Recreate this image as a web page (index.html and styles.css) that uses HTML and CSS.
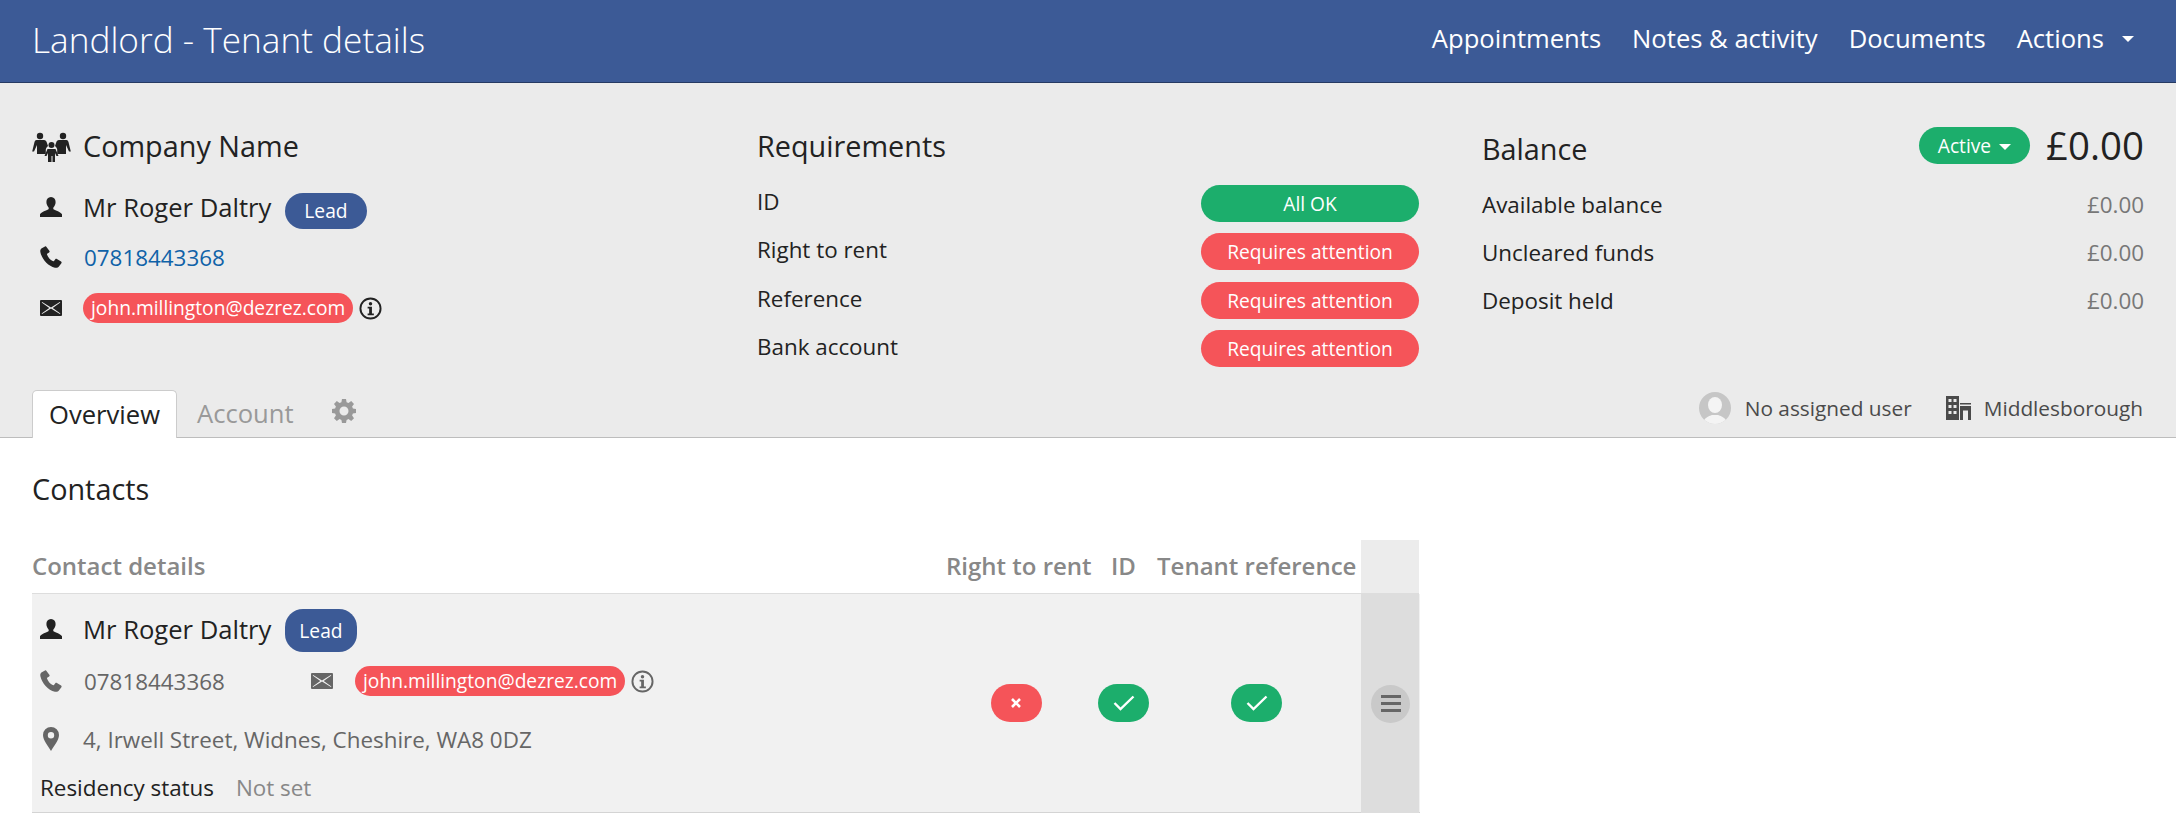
FILE: index.html
```html
<!DOCTYPE html>
<html lang="en">
<head>
<meta charset="utf-8">
<title>Landlord - Tenant details</title>
<link rel="stylesheet" href="styles.css">
</head>
<body>
<svg class="defs" width="0" height="0" aria-hidden="true">
  <symbol id="i-person" viewBox="0 0 22 20"><path d="M11 0c3 0 4.600 2.200 4.600 5 0 2.300-1 4.200-2 5.300-.5.600-.5 1.700.2 2.200 1.300.9 7.200 2.500 8.200 4.800V20H0v-2.700c1-2.300 6.900-3.900 8.200-4.800.7-.5.700-1.600.2-2.200-1-1.100-2-3-2-5.300C6.400 2.200 8 0 11 0z"/></symbol>
  <symbol id="i-phone" viewBox="0 0 22 22"><path d="M5 .5 1.800 2.200C.5 3 0 4.500.4 6.200c1.400 6.900 7.700 14 14.500 15.500 1.800.4 3.300-.3 4.200-1.500l2.300-3c.4-.6.300-1.300-.3-1.700l-4.200-2.600c-.6-.3-1.200-.2-1.600.3l-1.300 1.700c-.3.400-.8.400-1.300.2-2.400-1.200-4.800-4-5.600-6.400-.2-.5 0-1 .4-1.200l1.600-1c.5-.3.700-1 .4-1.500L6.500 1C6.200.4 5.600.2 5 .5z"/></symbol>
  <symbol id="i-mail" viewBox="0 0 22 16"><path fill-rule="evenodd" d="M1 0h20a1 1 0 0 1 1 1v14a1 1 0 0 1-1 1H1a1 1 0 0 1-1-1V1a1 1 0 0 1 1-1zm1.200 1.900-.5.700L9.300 8l-7.700 5.400.5.700L11 8.600l8.900 5.500.5-.7L12.700 8l7.600-5.400-.5-.7L11 7.500z"/></symbol>
  <symbol id="i-info" viewBox="0 0 24 24"><circle cx="12" cy="12" r="10.500" fill="none" stroke="currentColor" stroke-width="2"/><circle cx="12" cy="7" r="1.800"/><path d="M9 10.300h4.500v7H15.500V19h-6.500v-1.700h1.600v-5.300H9z"/></symbol>
  <symbol id="i-pin" viewBox="0 0 16 24"><path fill-rule="evenodd" d="M8 0a8 8 0 0 1 8 8c0 5-5 11-8 16C5 19 0 13 0 8a8 8 0 0 1 8-8zm0 5a3.200 3.200 0 1 0 0 6.400A3.200 3.200 0 0 0 8 5z"/></symbol>
</svg>

<header class="topbar">
  <h1 class="topbar-title">Landlord - Tenant details</h1>
  <nav class="topbar-nav">
    <a>Appointments</a>
    <a>Notes &amp; activity</a>
    <a>Documents</a>
    <a class="actions">Actions <span class="caret"></span></a>
  </nav>
</header>

<section class="summary">
  <div class="summary-grid">
    <div class="col-contact">
      <div class="line line-company">
        <svg class="ico-family" viewBox="0 0 39 30"><g fill="#222"><circle cx="8" cy="4" r="3.200"/><circle cx="31" cy="4" r="3.200"/><path d="M4.500 8h7.500c1.500 0 2.400 1 2.800 2.500L16 14c-1 .8-2 2-2.200 3.500V22H5v-9L2 19.500H.2L2.500 10C2.900 8.700 3.500 8 4.500 8z"/><path d="M34.500 8H27c-1.500 0-2.400 1-2.800 2.500L23 14c1 .8 2 2 2.200 3.500V22H34v-9l3 6.500h1.800L36.500 10C36.100 8.700 35.500 8 34.500 8z"/><circle cx="19.500" cy="13" r="3"/><path d="M15.500 17h8l3 7h-2l-1.500-3v9h-2.500v-6h-1v6H16v-9l-1.500 3h-2z"/></g></svg>
        <span class="company">Company Name</span>
      </div>
      <div class="line line-name">
        <svg class="ico"><use href="#i-person"/></svg>
        <span class="name">Mr Roger Daltry</span>
        <span class="lead lead-low">Lead</span>
      </div>
      <div class="line line-phone">
        <svg class="ico"><use href="#i-phone"/></svg>
        <a class="tel">07818443368</a>
      </div>
      <div class="line line-mail">
        <svg class="ico"><use href="#i-mail"/></svg>
        <span class="mail-pill">john.millington@dezrez.com</span>
        <svg class="ico-info"><use href="#i-info"/></svg>
      </div>
    </div>

    <div class="col-req">
      <h2 class="req-title">Requirements</h2>
      <div class="req-row"><span class="req-label">ID</span><span class="status ok">All OK</span></div>
      <div class="req-row"><span class="req-label">Right to rent</span><span class="status bad">Requires attention</span></div>
      <div class="req-row"><span class="req-label">Reference</span><span class="status bad">Requires attention</span></div>
      <div class="req-row"><span class="req-label">Bank account</span><span class="status bad">Requires attention</span></div>
    </div>

    <div class="col-bal">
      <div class="bal-head">
        <h2 class="bal-title">Balance</h2>
        <span class="active-pill">Active <span class="caret caret-sm"></span></span>
        <span class="bal-amount">£0.00</span>
      </div>
      <div class="bal-row"><span>Available balance</span><span class="muted">£0.00</span></div>
      <div class="bal-row"><span>Uncleared funds</span><span class="muted">£0.00</span></div>
      <div class="bal-row"><span>Deposit held</span><span class="muted">£0.00</span></div>
    </div>
  </div>

  <div class="tabbar">
    <div class="tabs">
      <span class="tab tab-on">Overview</span>
      <span class="tab">Account</span>
      <svg class="gear" viewBox="0 0 24 24"><path fill="#999" fill-rule="evenodd" d="M10 0h4l.6 3.200 1.900.8L19.200 2.100 22 4.900 20.100 7.600l.8 1.900 3.100.5v4l-3.100.6-.8 1.900 1.900 2.700-2.800 2.800-2.700-1.900-1.900.8L14 24h-4l-.6-3.100-1.900-.8-2.700 1.900L2 19.200l1.900-2.700-.8-1.900L0 14v-4l3.100-.5.800-1.900L2 4.900 4.800 2.100l2.700 1.900 1.900-.8zM12 7.500a4.500 4.500 0 1 0 0 9 4.500 4.500 0 0 0 0-9z"/></svg>
    </div>
    <div class="assign">
      <svg class="avatar" viewBox="0 0 32 32"><defs><clipPath id="av"><circle cx="16" cy="16" r="16"/></clipPath></defs><circle cx="16" cy="16" r="16" fill="#c6c6c6"/><g clip-path="url(#av)" fill="#f4f4f4"><ellipse cx="16" cy="13" rx="7" ry="8"/><path d="M4 32c0-6 6-8 9-9h6c3 1 9 3 9 9z"/></g></svg>
      <span>No assigned user</span>
      <svg class="building" viewBox="0 0 25 24"><path fill="#4a4a4a" fill-rule="evenodd" d="M0 0h13v24H0zM2.500 3v3h3V3zm5 0v3h3V3zM2.500 9v3h3V9zm5 0v3h3V9zM2.500 15v3h3v-3zm5 0v3h3v-3zM14 7h11v1.500H14zM14 10h11v14h-3v-9.500h-5V24h-3z"/></svg>
      <span>Middlesborough</span>
    </div>
  </div>
</section>

<main class="content">
  <h2 class="contacts-title">Contacts</h2>
  <div class="ctable">
    <div class="chead">
      <div class="cell-main">Contact details</div>
      <div class="cell-r">Right to rent</div>
      <div class="cell-i">ID</div>
      <div class="cell-t">Tenant reference</div>
      <div class="cell-act"></div>
    </div>
    <div class="crow">
      <div class="cell-main">
        <div class="c-line c-name">
          <svg class="ico"><use href="#i-person"/></svg>
          <span class="name">Mr Roger Daltry</span>
          <span class="lead lead-tall">Lead</span>
        </div>
        <div class="c-line c-contact">
          <svg class="ico grey"><use href="#i-phone"/></svg>
          <span class="c-tel">07818443368</span>
          <svg class="ico grey"><use href="#i-mail"/></svg>
          <span class="mail-pill">john.millington@dezrez.com</span>
          <svg class="ico-info grey"><use href="#i-info"/></svg>
        </div>
        <div class="c-line c-addr">
          <svg class="ico-pin"><use href="#i-pin"/></svg>
          <span>4, Irwell Street, Widnes, Cheshire, WA8 0DZ</span>
        </div>
        <div class="c-line c-res">
          <span>Residency status</span>
          <span class="not-set">Not set</span>
        </div>
      </div>
      <div class="cell-r"><span class="flag bad"><svg viewBox="0 0 12 12"><path d="M2 2l8 8M10 2l-8 8" stroke="#fff" stroke-width="2.600" fill="none"/></svg></span></div>
      <div class="cell-i"><span class="flag ok"><svg class="tick" viewBox="0 0 22 16"><path d="M1.500 8l6 6L20.500 1.500" stroke="#fff" stroke-width="2.400" fill="none"/></svg></span></div>
      <div class="cell-t"><span class="flag ok"><svg class="tick" viewBox="0 0 22 16"><path d="M1.500 8l6 6L20.500 1.500" stroke="#fff" stroke-width="2.400" fill="none"/></svg></span></div>
      <div class="cell-act"><span class="burger"><i></i><i></i><i></i></span></div>
    </div>
  </div>
</main>
</body>
</html>
```
FILE: styles.css
```css
* { box-sizing: border-box; }
html, body { margin: 0; padding: 0; }
body {
  height: 816px;
  overflow: hidden;
  background: #fff;
  color: #222;
  font-family: "Open Sans", "Liberation Sans", sans-serif;
  font-size: 22.4px;
}
.defs { position: absolute; }
h1, h2 { margin: 0; font-weight: 400; }

.topbar {
  height: 83px;
  background: #3c5a96;
  border-bottom: 1px solid #263a63;
  color: #fff;
  display: flex;
  align-items: center;
  justify-content: space-between;
  padding: 0 42px 5px 32px;
}
.topbar-title { font-size: 35.2px; font-weight: 300; }
.topbar-nav { display: flex; gap: 31px; font-size: 25.6px; }
.actions { display: flex; align-items: center; gap: 18px; }
.caret {
  display: inline-block;
  width: 0; height: 0;
  border-left: 6px solid transparent;
  border-right: 6px solid transparent;
  border-top: 6px solid #fff;
}
.caret-sm { vertical-align: middle; margin-left: 3px; }

.summary {
  height: 355px;
  background: #ebebeb;
  border-bottom: 1px solid #bdbdbd;
  display: flex;
  flex-direction: column;
  justify-content: space-between;
}
.summary-grid {
  display: grid;
  grid-template-columns: repeat(3, 662px);
  column-gap: 63px;
  padding: 0 32px;
}
.line { display: flex; align-items: center; }
.line-company { margin-top: 41px; height: 42px; font-size: 28.8px; }
.ico-family { width: 39px; height: 30px; margin: 3px 12px 0 0; }
.ico { width: 22px; height: 22px; fill: #222; margin: 0 21px 0 8px; flex: none; }
.line-name { margin-top: 21px; height: 40px; }
.name { font-size: 25.6px; }
.lead {
  background: #3c5a96;
  color: #fff;
  font-size: 19.2px;
  border-radius: 18px;
  padding: 0 19px;
  height: 36px;
  line-height: 36px;
  margin-left: 14px;
}
.lead-low { margin-top: 7px; }
.line-phone { margin-top: 10px; height: 40px; }
.tel { color: #0f62a8; font-size: 22.4px; margin-left: 1px; }
.line-mail { margin-top: 11px; height: 40px; }
.mail-pill {
  background: #f55459;
  color: #fff;
  font-size: 19.2px;
  height: 30px;
  line-height: 30px;
  border-radius: 15px;
  padding: 0 8px;
  white-space: nowrap;
  flex: none;
}
.ico-info { width: 23px; height: 23px; margin-left: 6px; color: #222; fill: currentColor; flex: none; }

.req-title { font-size: 28.8px; height: 40px; margin-top: 43px; line-height: 40px; }
.req-row {
  display: flex; justify-content: space-between; align-items: center;
  height: 37px;
  margin-bottom: 11.3px;
}
.req-title + .req-row { margin-top: 19px; }
.req-label { padding-bottom: 4px; }
.status {
  width: 218px;
  height: 37px;
  line-height: 37px;
  text-align: center;
  border-radius: 19px;
  color: #fff;
  font-size: 19.2px;
}
.ok { background: #1cae6c; }
.bad { background: #f55459; }

.bal-head { display: flex; align-items: center; margin-top: 37px; height: 50px; }
.bal-title { font-size: 28.8px; flex: 1; padding-top: 6px; }
.active-pill {
  background: #1cae6c; color: #fff;
  font-size: 19.2px;
  height: 37px; line-height: 37px;
  border-radius: 19px;
  padding: 0 19px;
  margin-right: 16px;
}
.bal-amount { font-size: 38.4px; }
.bal-row { display: flex; justify-content: space-between; height: 48.400px; align-items: center; }
.bal-head + .bal-row { margin-top: 10px; }
.muted { color: #777; }

.tabbar { display: flex; justify-content: space-between; align-items: flex-end; padding: 0 33px 0 32px; height: 48px; }
.tabs { display: flex; align-items: center; height: 48px; }
.tab { font-size: 25.6px; color: #999; padding: 0 21px 0 20px; }
.tab-on {
  color: #222;
  background: #fff;
  border: 1px solid #ccc;
  border-bottom: 0;
  border-radius: 5px 5px 0 0;
  height: 48px;
  line-height: 48px;
  width: 145px;
  text-align: center;
  padding: 0;
  margin-bottom: -1px;
}
.gear { width: 24px; height: 24px; margin: -4px 0 0 17px; }
.assign { display: flex; align-items: center; height: 48px; padding-bottom: 10px; font-size: 20.8px; color: #4a4a4a; }
.avatar { width: 32px; height: 32px; margin-right: 14px; }
.building { width: 25px; height: 24px; margin: 0 13px 0 34px; }

.content { padding: 0 32px; width: 1452px; }
.contacts-title { font-size: 28.8px; line-height: 34px; margin-top: 34px; height: 68px; }
.ctable { width: 1388px; }
.chead, .crow {
  display: grid;
  grid-template-columns: 904px 165px 56px 204px 59px;
}
.chead { font-weight: 600; color: #888; font-size: 24px; }
.chead > div { height: 54px; line-height: 52px; border-bottom: 1px solid #ddd; white-space: nowrap; }
.chead .cell-r, .chead .cell-i { padding-left: 10px; }
.chead .cell-act { width: 58px; background: #ececec; }
.crow { background: #f1f1f1; height: 219px; border-bottom: 1px solid #d4d4d4; }
.crow > div { display: flex; align-items: center; justify-content: center; }
.crow .cell-r, .crow .cell-t { padding-right: 5px; }
.crow .cell-i { padding-right: 11px; }
.crow .cell-main { display: block; padding-top: 5px; }
.crow .cell-act { background: #dddddd; width: 58px; margin-bottom: -1px; padding-left: 1px; }
.c-line { display: flex; align-items: center; }
.c-name { height: 44px; margin-top: 8px; }
.lead-tall { height: 43px; line-height: 43px; border-radius: 18px; padding: 0 14px; margin-top: 2px; }
.c-contact { height: 30px; margin-top: 15px; color: #666; }
.grey { fill: #666; color: #666; }
.c-tel { width: 219px; margin-left: 1px; }
.c-contact .ico:nth-of-type(2) { margin-right: 22px; }
.c-addr { margin-top: 28px; height: 30px; color: #666; }
.ico-pin { width: 16px; height: 24px; margin: 0 24px 0 11px; fill: #666; }
.c-res { margin-top: 18px; height: 30px; padding-left: 8px; }
.not-set { color: #888; margin-left: 22px; }
.flag { flex: none; width: 51px; height: 38px; border-radius: 19px; display: flex; align-items: center; justify-content: center; }
.flag svg { width: 12px; height: 12px; }
.flag .tick { width: 22px; height: 16px; }
.burger { flex: none; width: 39px; height: 38px; border-radius: 50%; background: #c9c9c9; display: flex; flex-direction: column; align-items: center; justify-content: center; gap: 4px; }
.burger i { display: block; width: 20px; height: 3px; background: #666; }
```
